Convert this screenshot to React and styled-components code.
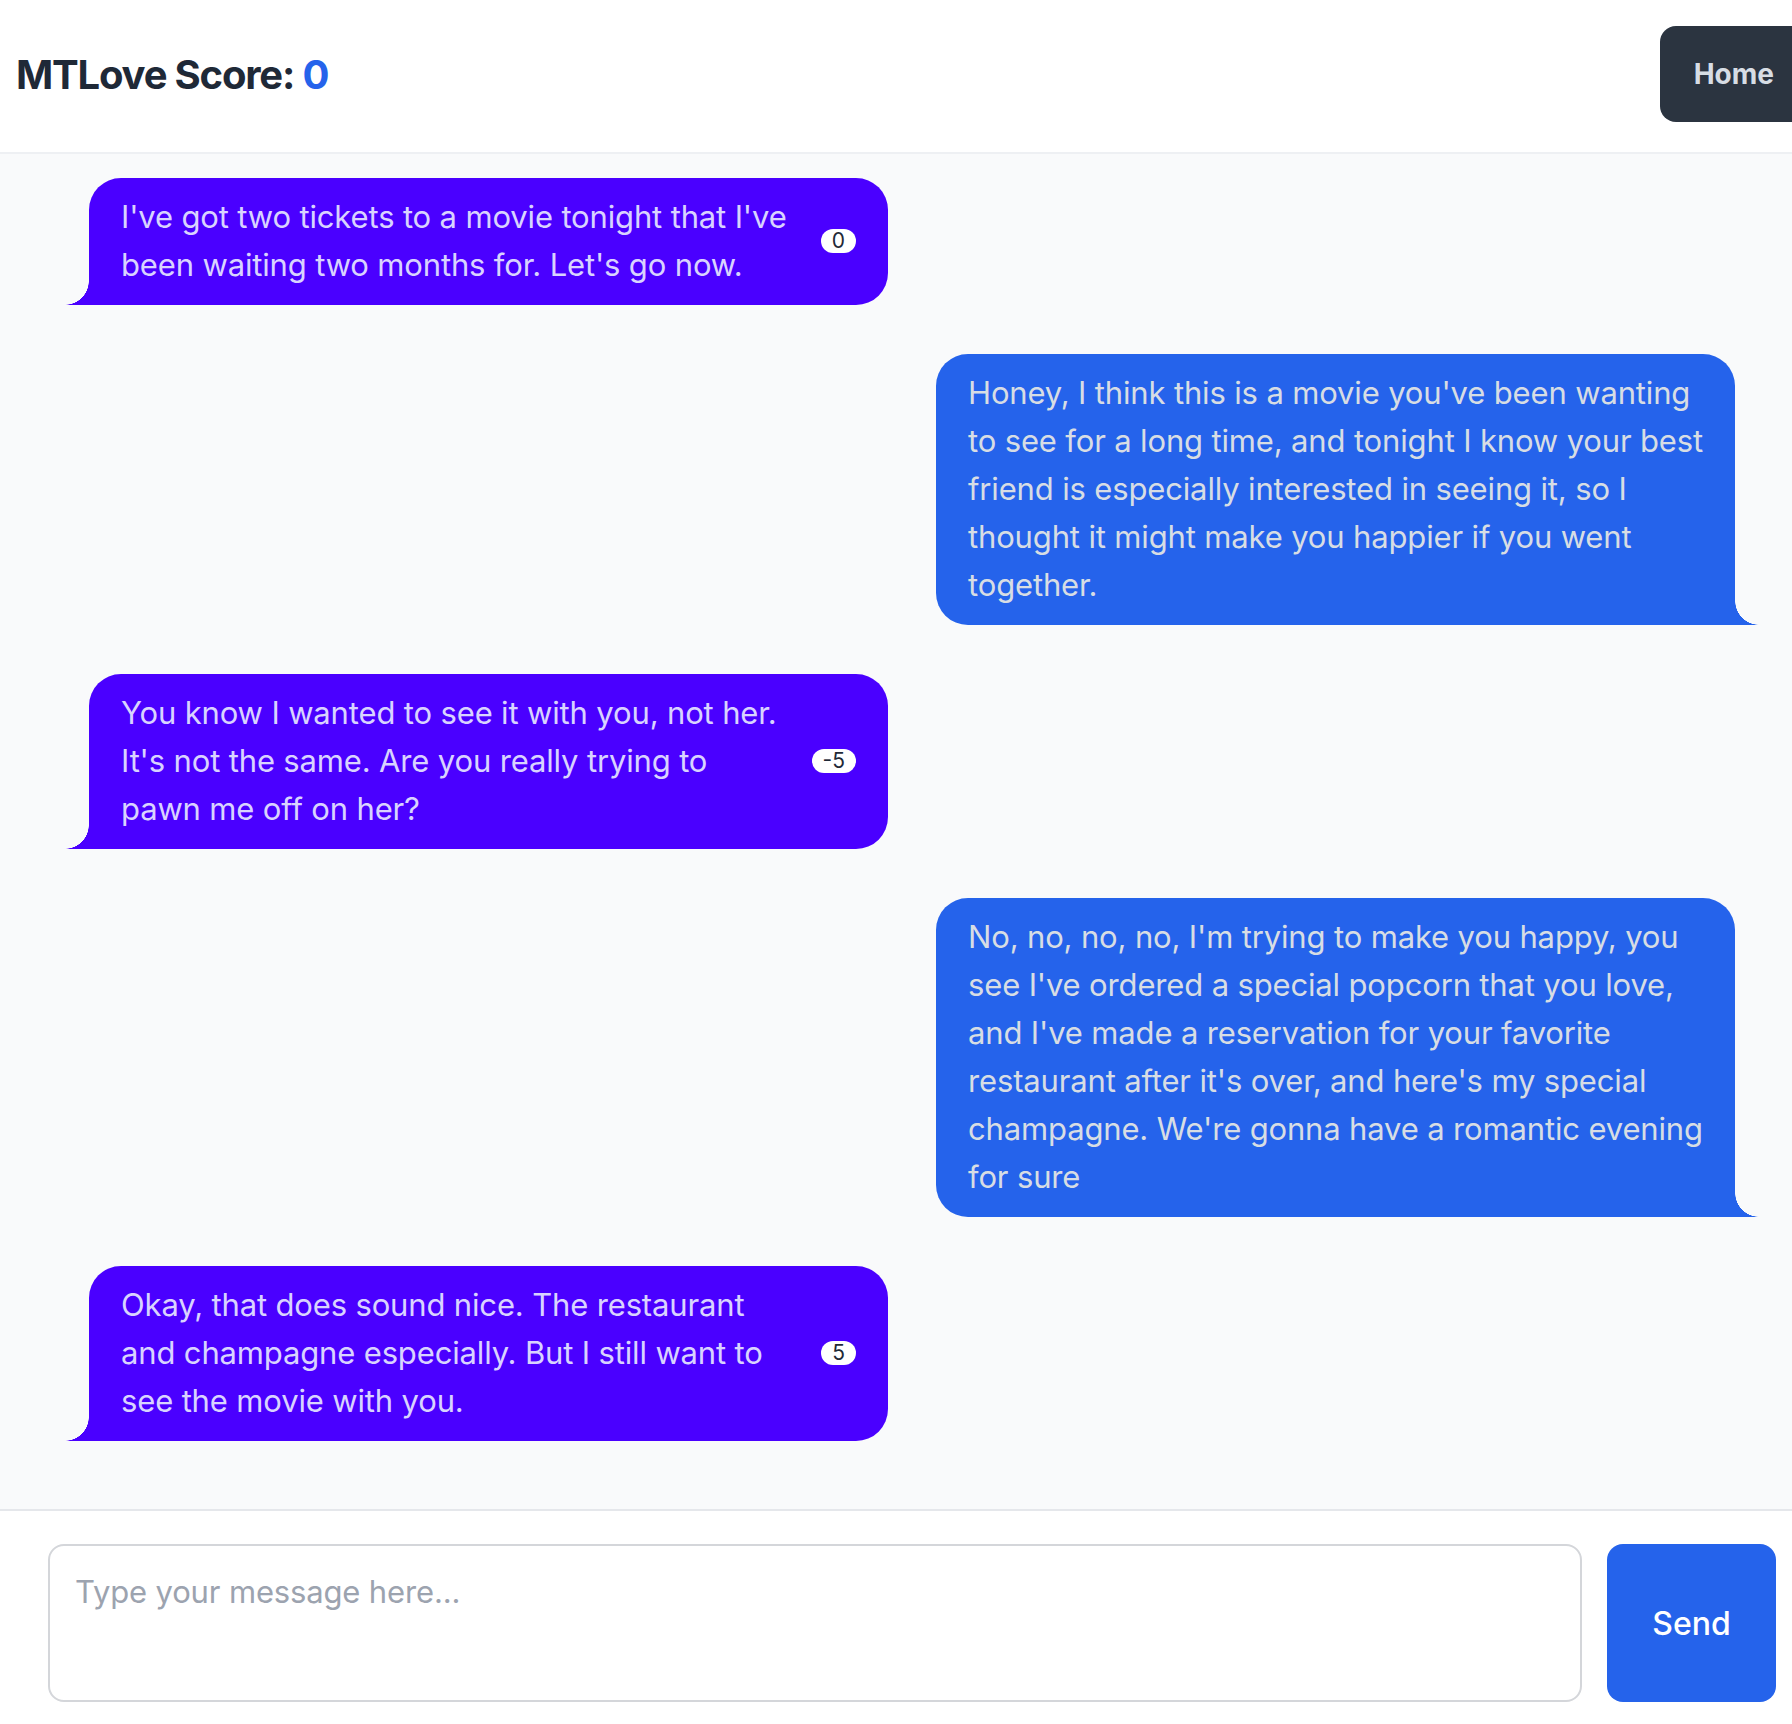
import React, { useState } from "react";
import styled, { createGlobalStyle } from "styled-components";

const GlobalStyle = createGlobalStyle`
  html, body {
    margin: 0;
    padding: 0;
    overflow: hidden;
  }
  body {
    font-family: Inter, "Noto Sans", sans-serif;
    background: #ffffff;
  }
  * {
    box-sizing: border-box;
  }
`;

const Page = styled.div`
  width: 1824px;
  height: 1724px;
  display: flex;
  flex-direction: column;
`;

const Header = styled.header`
  height: 154px;
  flex-shrink: 0;
  display: flex;
  align-items: center;
  justify-content: space-between;
  padding: 0 16px;
  background: #ffffff;
  border-bottom: 2px solid #eef0f3;
`;

const Title = styled.h1`
  margin: 0 0 4px;
  font-size: 40px;
  font-weight: 700;
  color: #1f2937;
  letter-spacing: -1.2px;
`;

const Score = styled.span`
  color: #2563eb;
`;

const HomeButton = styled.button`
  height: 96px;
  margin-top: -4px;
  padding: 0 34px;
  border: none;
  border-radius: 16px;
  background: #2b3440;
  color: #d7dde4;
  font-family: inherit;
  font-size: 28px;
  font-weight: 700;
  cursor: pointer;
`;

const ChatArea = styled.main`
  flex: 1;
  background: #f9fafb;
  padding: 24px 65px;
  display: flex;
  flex-direction: column;
  gap: 49px;
`;

const Row = styled.div`
  display: flex;
  justify-content: ${(p) => (p.$mine ? "flex-end" : "flex-start")};
  padding: ${(p) => (p.$mine ? "0 24px 0 0" : "0 0 0 24px")};
`;

const Bubble = styled.div`
  position: relative;
  width: 799px;
  display: flex;
  align-items: center;
  gap: 18px;
  padding: 15px 32px 16px;
  font-size: 31px;
  line-height: 48px;
  letter-spacing: -0.15px;
  background: ${(p) => (p.$mine ? "#2563eb" : "#4a00ff")};
  color: ${(p) => (p.$mine ? "#d7dde4" : "#d9d3ff")};
  border-radius: 32px;
  ${(p) =>
    p.$mine ? "border-bottom-right-radius: 0;" : "border-bottom-left-radius: 0;"}

  &::before {
    content: "";
    position: absolute;
    bottom: 0;
    width: 24px;
    height: 24px;
    ${(p) =>
      p.$mine
        ? `right: -24px; background: radial-gradient(circle at top right, transparent 23.5px, #2563eb 24px);`
        : `left: -24px; background: radial-gradient(circle at top left, transparent 23.5px, #4a00ff 24px);`}
  }
`;

const BubbleText = styled.div`
  flex: 1;
`;

const Badge = styled.span`
  flex-shrink: 0;
  height: 24px;
  padding: 0 11px;
  border-radius: 999px;
  background: #ffffff;
  color: #1f2937;
  font-size: 21px;
  line-height: 24px;
  letter-spacing: 0;
`;

const InputBar = styled.footer`
  height: 215px;
  flex-shrink: 0;
  display: flex;
  gap: 25px;
  padding: 33px 48px 23px;
  background: #ffffff;
  border-top: 2px solid #e5e7eb;
`;

const MessageInput = styled.textarea`
  flex: 1;
  height: 158px;
  resize: none;
  border: 2px solid #d4d6da;
  border-radius: 16px;
  padding: 24px 25px;
  font-family: inherit;
  font-size: 31px;
  line-height: 44px;
  letter-spacing: -0.15px;
  color: #1f2937;
  outline: none;

  &::placeholder {
    color: #9ca3af;
  }
`;

const SendButton = styled.button`
  width: 169px;
  height: 158px;
  border: none;
  border-radius: 16px;
  background: #2563eb;
  color: #ffffff;
  font-family: inherit;
  font-size: 32px;
  font-weight: 500;
  cursor: pointer;
`;

const messages = [
  {
    mine: false,
    text: "I've got two tickets to a movie tonight that I've been waiting two months for. Let's go now.",
    score: "0",
  },
  {
    mine: true,
    text: "Honey, I think this is a movie you've been wanting to see for a long time, and tonight I know your best friend is especially interested in seeing it, so I thought it might make you happier if you went together.",
  },
  {
    mine: false,
    text: "You know I wanted to see it with you, not her. It's not the same. Are you really trying to pawn me off on her?",
    score: "-5",
  },
  {
    mine: true,
    text: "No, no, no, no, I'm trying to make you happy, you see I've ordered a special popcorn that you love, and I've made a reservation for your favorite restaurant after it's over, and here's my special champagne. We're gonna have a romantic evening for sure",
  },
  {
    mine: false,
    text: "Okay, that does sound nice. The restaurant and champagne especially. But I still want to see the movie with you.",
    score: "5",
  },
];

export default function App() {
  const [draft, setDraft] = useState("");

  return (
    <Page>
      <GlobalStyle />
      <Header>
        <Title>
          MTLove Score: <Score>0</Score>
        </Title>
        <HomeButton>Home</HomeButton>
      </Header>
      <ChatArea>
        {messages.map((m, i) => (
          <Row key={i} $mine={m.mine}>
            <Bubble $mine={m.mine}>
              <BubbleText>{m.text}</BubbleText>
              {m.score !== undefined && <Badge>{m.score}</Badge>}
            </Bubble>
          </Row>
        ))}
      </ChatArea>
      <InputBar>
        <MessageInput
          placeholder="Type your message here..."
          value={draft}
          onChange={(e) => setDraft(e.target.value)}
        />
        <SendButton>Send</SendButton>
      </InputBar>
    </Page>
  );
}
